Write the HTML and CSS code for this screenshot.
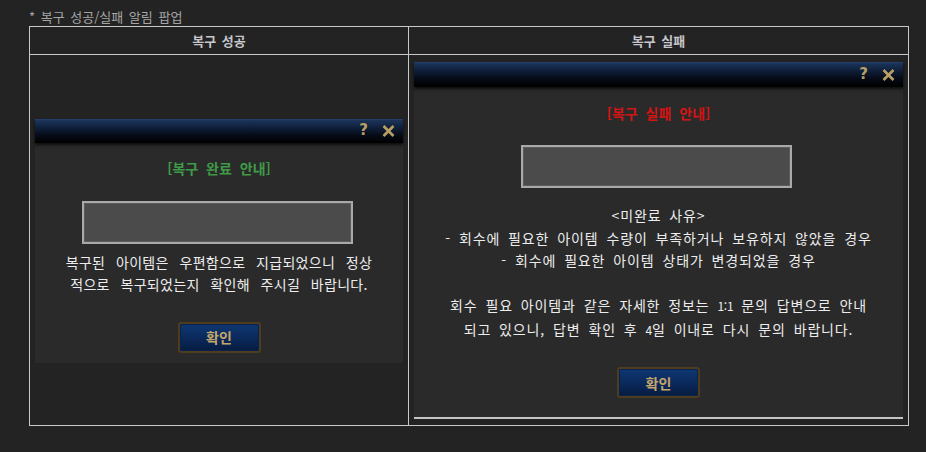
FILE: index.html
```html
<!DOCTYPE html>
<html lang="ko">
<head>
<meta charset="utf-8">
<title>복구 성공/실패 알림 팝업</title>
<link rel="stylesheet" href="styles.css">
</head>
<body>
<div class="page">
  <div class="caption">* 복구 성공/실패 알림 팝업</div>
  <div class="table">
    <div class="th">복구 성공</div>
    <div class="th th-right">복구 실패</div>
    <div class="td">
      <div class="popup popup-left">
        <div class="titlebar">
          <span class="help">?</span>
          <svg class="close" width="13" height="12" viewBox="0 0 13 12"><path d="M1.5 1 L11.5 11 M11.5 1 L1.5 11" stroke="#b89f63" stroke-width="2.6" stroke-linecap="butt"/></svg>
        </div>
        <div class="pbody pbody-left">
          <div class="ptitle ok">[복구 완료 안내]</div>
          <div class="field field-left"></div>
          <div class="msg">복구된 아이템은 우편함으로 지급되었으니 정상<br>적으로 복구되었는지 확인해 주시길 바랍니다.</div>
          <div class="btn btn-left">확인</div>
        </div>
      </div>
    </div>
    <div class="td td-right">
      <div class="popup popup-right">
        <div class="titlebar titlebar-right">
          <span class="help">?</span>
          <svg class="close" width="13" height="12" viewBox="0 0 13 12"><path d="M1.5 1 L11.5 11 M11.5 1 L1.5 11" stroke="#b89f63" stroke-width="2.6" stroke-linecap="butt"/></svg>
        </div>
        <div class="pbody pbody-right">
          <div class="ptitle fail">[복구 실패 안내]</div>
          <div class="field field-right"></div>
          <div class="msg msg-right">&lt;미완료 사유&gt;<br>- 회수에 필요한 아이템 수량이 부족하거나 보유하지 않았을 경우<br>- 회수에 필요한 아이템 상태가 변경되었을 경우<br><br>회수 필요 아이템과 같은 자세한 정보는 <span class="num">1:1</span> 문의 답변으로 안내<br>되고 있으니, 답변 확인 후 <span class="num">4</span>일 이내로 다시 문의 바랍니다.</div>
          <div class="btn btn-right">확인</div>
        </div>
      </div>
    </div>
  </div>
</div>
</body>
</html>
```
FILE: styles.css
```css
html, body {
  margin: 0;
  padding: 0;
  background: #232323;
}
body {
  font-family: "Noto Sans CJK KR", "Noto Sans", sans-serif;
  color: #e6e6e6;
}
.page {
  padding: 8px 0 0 29px;
  width: 880px;
}
.caption {
  height: 18px;
  line-height: 18px;
  font-size: 13px;
  color: #a5a5a5;
  word-spacing: 2px;
}
.table {
  width: 878px;
  border: 1px solid #c9c9c9;
  display: grid;
  grid-template-columns: 378px 1fr;
  grid-template-rows: 28px 370px;
}
.th {
  border-bottom: 1px solid #c9c9c9;
  display: flex;
  align-items: center;
  justify-content: center;
  font-size: 13px;
  font-weight: bold;
  color: #c6c6cc;
  word-spacing: 2px;
}
.th-right, .td-right {
  border-left: 1px solid #c9c9c9;
}
.td {
  display: flex;
  align-items: center;
  justify-content: center;
}
.popup {
  display: flex;
  flex-direction: column;
}
.popup-left { width: 368px; margin-top: 1px; }
.popup-right { width: 489px; margin-top: 1px; }
.titlebar {
  height: 24px;
  background: linear-gradient(#2a4776 0, #1c355c 1px, #10213d 8px, #050a14 17px, #000 24px);
  box-shadow: 0 2px 3px rgba(0, 0, 0, 0.7);
  display: flex;
  align-items: center;
  justify-content: flex-end;
  padding-right: 8px;
  gap: 14px;
  position: relative;
  z-index: 1;
}
.titlebar-right { height: 25px; }
.help {
  font-family: "DejaVu Sans", sans-serif;
  font-weight: bold;
  font-size: 15px;
  line-height: 15px;
  color: #b89f63;
}
.close { display: block; margin-top: 1px; }
.pbody {
  background: #2a2a2a;
  display: flex;
  flex-direction: column;
  align-items: center;
}
.pbody-left {
  height: 220px;
  padding-top: 15px;
  box-sizing: border-box;
}
.pbody-right {
  height: 332px;
  padding-top: 16px;
  box-sizing: border-box;
  border-bottom: 2px solid #c4c4c4;
}
.ptitle {
  font-size: 14px;
  font-weight: bold;
  line-height: 20px;
  word-spacing: 4px;
}
.ok { color: #3f9a48; }
.fail { color: #d41414; }
.field {
  height: 43px;
  box-sizing: border-box;
  border: 2px solid #a9a9a9;
  background: #4b4b4b;
  box-shadow: inset 0 0 0 1px #5c5c5c;
}
.field-left { width: 271px; margin-top: 23px; margin-right: 3px; }
.field-right { width: 271px; margin-top: 22px; margin-right: 5px; }
.msg {
  margin-top: 7px;
  font-size: 14px;
  line-height: 22px;
  text-align: center;
  color: #ededed;
  letter-spacing: 0.3px;
  word-spacing: 6.5px;
}
.msg-right {
  margin-top: 16px;
  font-size: 14px;
  line-height: 22.5px;
  letter-spacing: 0.85px;
  word-spacing: 3.2px;
}
.num {
  font-size: 12px;
  letter-spacing: -0.3px;
}
.btn {
  width: 83px;
  height: 31px;
  box-sizing: border-box;
  border: 2px solid #4e3c1e;
  border-radius: 3px;
  background: linear-gradient(#0f3774, #0a2a5c 50%, #061b40);
  box-shadow: inset 0 0 0 1px #0b234c;
  color: #c4a56c;
  font-size: 14px;
  font-weight: bold;
  display: flex;
  align-items: center;
  justify-content: center;
}
.btn-left { margin-top: 27px; }
.btn-right { margin-top: 26px; }
```
